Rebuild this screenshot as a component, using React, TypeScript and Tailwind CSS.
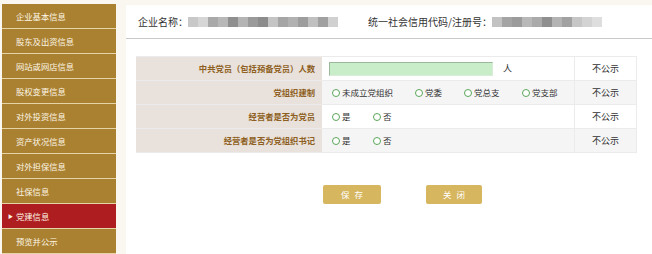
import React from 'react';

const menu = [
  '企业基本信息',
  '股东及出资信息',
  '网站或网店信息',
  '股权变更信息',
  '对外投资信息',
  '资产状况信息',
  '对外担保信息',
  '社保信息',
  '党建信息',
  '预览并公示',
];

function Mosaic({ shades }: { shades: string[] }) {
  return (
    <span className="inline-flex h-[10px] items-center">
      {shades.map((c, i) => (
        <span key={i} className="h-[10px] w-[10px]" style={{ background: c }} />
      ))}
    </span>
  );
}

function Radio({ label, className = '' }: { label: string; className?: string }) {
  return (
    <span className={`flex items-center gap-[2px] ${className}`}>
      <span className="h-[8px] w-[8px] rounded-full border border-[#5ba65b] bg-white" />
      <span>{label}</span>
    </span>
  );
}

function Row({ label, children, shade }: { label: string; children: React.ReactNode; shade?: boolean }) {
  return (
    <div className={`flex h-[24px] border-b border-[#ebebeb] ${shade ? 'bg-[#f5f5f5]' : 'bg-white'}`}>
      <div className="flex w-[186px] items-center justify-end bg-[#e9e1db] pr-[7px] font-bold text-[#8d5f22]">
        {label}
      </div>
      <div className="flex w-[253px] items-center border-r border-[#ebebeb] pl-[10px] text-[8.5px] text-[#333]">
        {children}
      </div>
      <div className="flex flex-1 items-center justify-center text-[9px] text-[#333]">不公示</div>
    </div>
  );
}

export default function App() {
  return (
    <div
      className="flex h-[254px] w-[652px] bg-[#faf7f0]"
      style={{ fontFamily: '"Noto Sans CJK SC", "Noto Sans", sans-serif' }}
    >
      <div className="w-[116px] pl-[2px] pt-[4px]">
        {menu.map((m) => {
          const active = m === '党建信息';
          return (
            <div
              key={m}
              className={`relative flex h-[25px] items-center border-b border-[#e6d4a6] pl-[14px] text-[8.3px] text-[#fdf6e6] ${
                active ? 'bg-[#ae1d20]' : 'bg-[#aa8131]'
              }`}
            >
              {active && <span className="absolute left-[6px] text-[5px]">▶</span>}
              {m}
            </div>
          );
        })}
      </div>

      <div className="ml-[10px] mt-[5px] flex-1 bg-white">
        <div className="flex h-[34px] items-center border-b border-[#c9c9c9] pl-[12px] text-[10px] text-[#333]">
          <span>企业名称：</span>
          <Mosaic shades={['#c8c8c8', '#d6d6d6', '#a9a9a9', '#b8b8b8', '#8f8f8f', '#b4b4b4', '#9a9a9a', '#8c8c8c', '#c4c4c4', '#a5a5a5', '#b1b1b1', '#9d9d9d', '#c0c0c0', '#a0a0a0', '#d0d0d0']} />
          <span className="ml-[30px]">统一社会信用代码/注册号：</span>
          <Mosaic shades={['#c2c2c2', '#a4a4a4', '#9b9b9b', '#b8b8b8', '#aaaaaa', '#8f8f8f', '#b3b3b3', '#a1a1a1', '#c6c6c6', '#d3d3d3', '#dedede']} />
        </div>

        <div className="ml-[10px] mt-[17px] w-[501px] border-r border-t border-[#ebebeb] text-[8.3px]">
          <Row label="中共党员（包括预备党员）人数">
            <span className="-ml-[3px] h-[14px] w-[164px] border border-[#9bb89b] border-b-[#d9ecd9] border-r-[#d9ecd9] bg-[#c9ecc9]" />
            <span className="ml-[10px] text-[9px]">人</span>
          </Row>
          <Row label="党组织建制" shade>
            <Radio label="未成立党组织" className="w-[83px]" />
            <Radio label="党委" className="w-[49px]" />
            <Radio label="党总支" className="w-[58px]" />
            <Radio label="党支部" />
          </Row>
          <Row label="经营者是否为党员">
            <Radio label="是" className="w-[41px]" />
            <Radio label="否" />
          </Row>
          <Row label="经营者是否为党组织书记" shade>
            <Radio label="是" className="w-[41px]" />
            <Radio label="否" />
          </Row>
        </div>

        <div className="mt-[32px] flex gap-[45px] pl-[197px]">
          <button className="flex h-[19px] w-[58px] items-center justify-center rounded-[2px] bg-[#d6b65f] text-[8.5px] tracking-[5px] text-white">
            <span className="pl-[5px]">保存</span>
          </button>
          <button className="flex h-[19px] w-[56px] items-center justify-center rounded-[2px] bg-[#d6b65f] text-[8.5px] tracking-[5px] text-white">
            <span className="pl-[5px]">关闭</span>
          </button>
        </div>
      </div>
    </div>
  );
}
